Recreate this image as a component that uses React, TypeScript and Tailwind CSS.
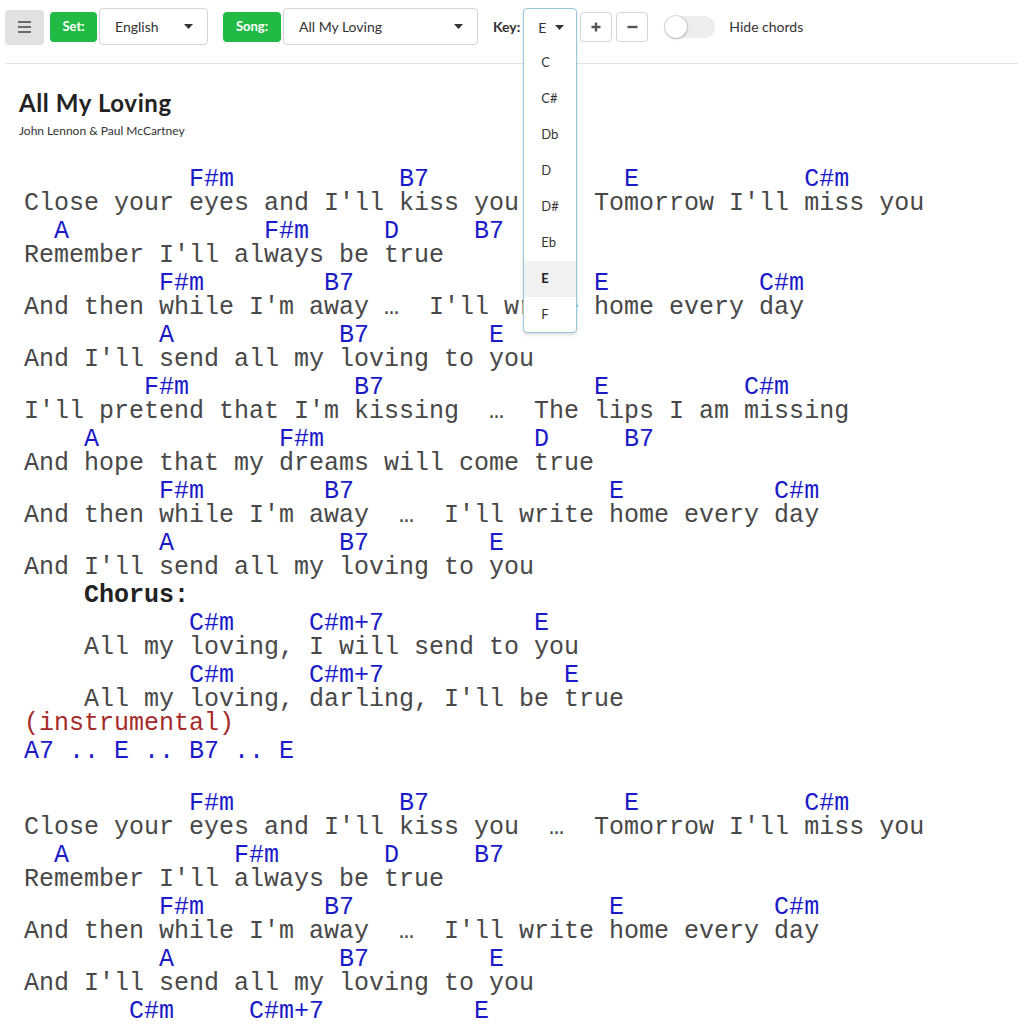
import React from "react";

type Line =
  | { t: "chord"; c: [number, string][] }
  | { t: "chordtext"; s: string }
  | { t: "lyric"; s: string }
  | { t: "chorus"; s: string }
  | { t: "instr"; s: string }
  | { t: "empty" };

function buildChords(c: [number, string][]): string {
  let s = "";
  for (const [col, name] of c) {
    while (s.length < col) s += " ";
    s += name;
  }
  return s;
}

const lines: Line[] = [
  { t: "chord", c: [[11, "F#m"], [25, "B7"], [40, "E"], [52, "C#m"]] },
  { t: "lyric", s: "Close your eyes and I'll kiss you  \u2026  Tomorrow I'll miss you" },
  { t: "chord", c: [[2, "A"], [16, "F#m"], [24, "D"], [30, "B7"]] },
  { t: "lyric", s: "Remember I'll always be true" },
  { t: "chord", c: [[9, "F#m"], [20, "B7"], [38, "E"], [49, "C#m"]] },
  { t: "lyric", s: "And then while I'm away \u2026  I'll write home every day" },
  { t: "chord", c: [[9, "A"], [21, "B7"], [31, "E"]] },
  { t: "lyric", s: "And I'll send all my loving to you" },
  { t: "chord", c: [[8, "F#m"], [22, "B7"], [38, "E"], [48, "C#m"]] },
  { t: "lyric", s: "I'll pretend that I'm kissing  \u2026  The lips I am missing" },
  { t: "chord", c: [[4, "A"], [17, "F#m"], [34, "D"], [40, "B7"]] },
  { t: "lyric", s: "And hope that my dreams will come true" },
  { t: "chord", c: [[9, "F#m"], [20, "B7"], [39, "E"], [50, "C#m"]] },
  { t: "lyric", s: "And then while I'm away  \u2026  I'll write home every day" },
  { t: "chord", c: [[9, "A"], [21, "B7"], [31, "E"]] },
  { t: "lyric", s: "And I'll send all my loving to you" },
  { t: "chorus", s: "    Chorus:" },
  { t: "chord", c: [[11, "C#m"], [19, "C#m+7"], [34, "E"]] },
  { t: "lyric", s: "    All my loving, I will send to you" },
  { t: "chord", c: [[11, "C#m"], [19, "C#m+7"], [36, "E"]] },
  { t: "lyric", s: "    All my loving, darling, I'll be true" },
  { t: "instr", s: "(instrumental)" },
  { t: "chordtext", s: "A7 .. E .. B7 .. E" },
  { t: "empty" },
  { t: "chord", c: [[11, "F#m"], [25, "B7"], [40, "E"], [52, "C#m"]] },
  { t: "lyric", s: "Close your eyes and I'll kiss you  \u2026  Tomorrow I'll miss you" },
  { t: "chord", c: [[2, "A"], [14, "F#m"], [24, "D"], [30, "B7"]] },
  { t: "lyric", s: "Remember I'll always be true" },
  { t: "chord", c: [[9, "F#m"], [20, "B7"], [39, "E"], [50, "C#m"]] },
  { t: "lyric", s: "And then while I'm away  \u2026  I'll write home every day" },
  { t: "chord", c: [[9, "A"], [21, "B7"], [31, "E"]] },
  { t: "lyric", s: "And I'll send all my loving to you" },
  { t: "chord", c: [[7, "C#m"], [15, "C#m+7"], [30, "E"]] },
];

function Caret() {
  return (
    <svg width="9" height="5" viewBox="0 0 9 5" className="shrink-0">
      <path d="M0 0 L9 0 L4.5 5 Z" fill="#333" />
    </svg>
  );
}

function Select({ label, width }: { label: string; width: string }) {
  return (
    <div
      className={`${width} h-[37px] border border-[#d4d4d5] rounded-[4px] bg-white flex items-center justify-between pl-[15px] pr-[14px] text-[14px] text-[#333]`}
    >
      <span>{label}</span>
      <Caret />
    </div>
  );
}

function GreenLabel({ text, width }: { text: string; width: string }) {
  return (
    <div
      className={`${width} h-[30px] rounded-[4px] bg-[#21ba45] text-white font-bold text-[13px] flex items-center justify-center`}
    >
      {text}
    </div>
  );
}

const keys = ["C", "C#", "Db", "D", "D#", "Eb", "E", "F"];

export default function App() {
  return (
    <div
      className="bg-white w-[1024px] h-[1024px] overflow-hidden text-[#333]"
      style={{ fontFamily: "Lato, 'Noto Sans', sans-serif" }}
    >
      <div className="px-[5px] pr-[6px]">
        <div className="flex items-center pt-[8px] h-[45px]">
          <div className="w-[39px] h-[35px] mt-[1px] rounded-[4px] bg-[#e0e1e2] flex flex-col items-center justify-center gap-[3px]">
            <div className="w-[13px] h-[2px] bg-[#6b6b6b]" />
            <div className="w-[13px] h-[2px] bg-[#6b6b6b]" />
            <div className="w-[13px] h-[2px] bg-[#6b6b6b]" />
          </div>
          <div className="ml-[6px]">
            <GreenLabel text="Set:" width="w-[47px]" />
          </div>
          <div className="ml-[2px]">
            <Select label="English" width="w-[109px]" />
          </div>
          <div className="ml-[15px]">
            <GreenLabel text="Song:" width="w-[58px]" />
          </div>
          <div className="ml-[2px]">
            <Select label="All My Loving" width="w-[195px]" />
          </div>
          <div className="ml-[15px] font-bold text-[14px] text-[#333]">Key:</div>
          <div className="ml-[3px] relative w-[54px] h-[37px] z-10">
            <div className="absolute left-0 top-0 w-[54px] h-[325px] border border-[#96c8da] rounded-[4px] bg-white shadow-[0_2px_3px_0_rgba(34,36,38,0.15)]">
              <div className="h-[36px] flex items-center pl-[14px] pr-[10px] gap-[9px] text-[14px]">
                <span>E</span>
                <Caret />
              </div>
              <div className="flex flex-col">
                {keys.map((k) => (
                  <div
                    key={k}
                    className={`h-[36px] flex items-center pl-[17px] text-[13px] ${
                      k === "E" ? "bg-[#f2f2f2] font-bold text-[#222]" : "text-[#333]"
                    }`}
                  >
                    {k}
                  </div>
                ))}
              </div>
            </div>
          </div>
          <div className="ml-[3px] w-[32px] h-[30px] mt-[1px] border border-[#d4d4d5] rounded-[4px] bg-white flex items-center justify-center">
            <svg width="10" height="10" viewBox="0 0 10 10">
              <path d="M5 0.5 V9.5 M0.5 5 H9.5" stroke="#555" strokeWidth="2.4" />
            </svg>
          </div>
          <div className="ml-[4px] w-[32px] h-[30px] mt-[1px] border border-[#d4d4d5] rounded-[4px] bg-white flex items-center justify-center">
            <svg width="11" height="10" viewBox="0 0 11 10">
              <path d="M0.5 5 H10.5" stroke="#555" strokeWidth="2.4" />
            </svg>
          </div>
          <div className="ml-[17px] w-[50px] h-[22px] rounded-full bg-[#ededed] relative">
            <div className="absolute left-0 top-0 w-[22px] h-[22px] rounded-full bg-white shadow-[0_1px_2px_0_rgba(34,36,38,0.25),0_0_0_1px_rgba(34,36,38,0.15)]" />
          </div>
          <div className="ml-[14px] text-[14px] text-[#333]">Hide chords</div>
        </div>
        <div className="mt-[18px] h-px bg-[#e2e2e2]" />
      </div>

      <div className="pl-[19px]">
        <div className="mt-[25px] text-[24px] leading-[28px] font-bold tracking-[0.6px] text-[#222]">All My Loving</div>
        <div className="mt-[6px] text-[12px] leading-[16px] text-[#333]">John Lennon &amp; Paul McCartney</div>

        <div
          className="mt-[25px] ml-[5px] text-[25px] whitespace-pre"
          style={{ fontFamily: "'Liberation Mono', 'DejaVu Sans Mono', monospace" }}
        >
          {lines.map((l, i) => {
            if (l.t === "chord")
              return (
                <div key={i} className="pt-[4px] leading-[24px] text-[#1a1ac8]">
                  {buildChords(l.c)}
                </div>
              );
            if (l.t === "chordtext")
              return (
                <div key={i} className="pt-[4px] leading-[24px] text-[#1a1ac8]">
                  {l.s}
                </div>
              );
            if (l.t === "lyric")
              return (
                <div key={i} className="leading-[24px] text-[#484848]">
                  {l.s}
                </div>
              );
            if (l.t === "chorus")
              return (
                <div key={i} className="pt-[4px] leading-[24px] font-bold text-[#222]">
                  {l.s}
                </div>
              );
            if (l.t === "instr")
              return (
                <div key={i} className="leading-[24px] text-[#a52a2a]">
                  {l.s}
                </div>
              );
            return <div key={i} className="h-[24px]" />;
          })}
        </div>
      </div>
    </div>
  );
}
